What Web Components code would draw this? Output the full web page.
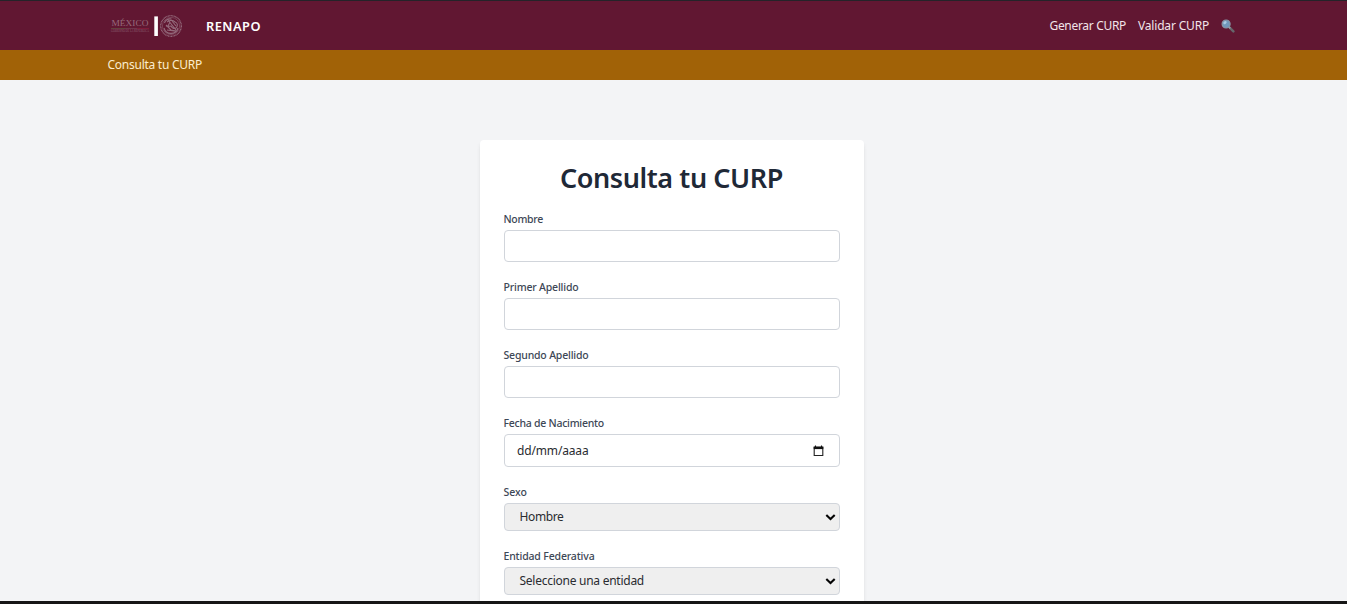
<!DOCTYPE html>
<html lang="es">
<head>
<meta charset="utf-8">
<title>Consulta tu CURP</title>
<style>
html,body{margin:0;height:100%;overflow:hidden}
body{font-family:"Noto Sans","Open Sans",sans-serif;background:#f3f4f6}
</style>
</head>
<body>
<renapo-page></renapo-page>
<script>
const define = (name, html, setup) => {
  const template = document.createElement('template');
  template.innerHTML = html;
  customElements.define(name, class extends HTMLElement {
    connectedCallback() {
      if (this.shadowRoot) return;
      this.attachShadow({mode: 'open'}).append(template.content.cloneNode(true));
      if (setup) setup(this, this.shadowRoot);
    }
  });
};

/* A single line of text whose tracking adapts to the measure it is given. */
define('fit-text', `
<style>:host{display:inline-block;white-space:nowrap}span{display:inline-block}</style>
<span><slot></slot></span>`, (host, root) => {
  const span = root.querySelector('span');
  const target = Number(host.getAttribute('measure'));
  const natural = span.getBoundingClientRect().width;
  if (target && natural) {
    span.style.letterSpacing = (target - natural) / host.textContent.length + 'px';
    host.style.width = target + 'px';
  }
});

define('mexico-logo', `
<style>:host{display:block;width:74px;height:26px}svg{display:block}</style>
<svg width="74" height="26" viewBox="0 0 74 26">
  <text x="1.5" y="13" textLength="37" lengthAdjust="spacingAndGlyphs" font-family="Liberation Serif,serif" font-size="9" fill="#96697b">MÉXICO</text>
  <path d="M1 15.5H16" stroke="#665343" stroke-width=".7"/><path d="M16 15.5H27" stroke="#805467" stroke-width=".5"/><path d="M27 15.5H39" stroke="#8c1d3d" stroke-width=".7"/>
  <text x="1" y="19.4" textLength="38" lengthAdjust="spacingAndGlyphs" font-family="Liberation Serif,serif" font-size="3.2" fill="#8c6072">GOBIERNO DE LA REPÚBLICA</text>
  <rect x="44.3" y="3.4" width="3.6" height="19.6" fill="#fff"/>
  <g fill="none" stroke="#946b7c">
    <circle cx="61" cy="13" r="10.3" stroke-width="1.3" stroke-dasharray="1 .5"/>
    <circle cx="61" cy="13" r="8.6" stroke-width=".5"/>
    <path stroke-width="1.1" d="M54 15c1 4 4 5.4 7 5.4s6-1.4 7-5.4M54.5 10c1-3 4-4.5 7-4M57 9c3-2 6-2 8 0 3 1 3 4 1 6-2 1-4 0-5-2-2 0-3 1-5 0M58 7l4 5 4 5M62 8l4 5M56 12l5 5 5 1M57 17l7 1M60 9l-2 4"/>
  </g>
</svg>`);

define('search-glyph', `
<style>:host{display:block;width:14px;height:14px}svg{display:block}</style>
<svg width="14" height="14" viewBox="0 0 14 14">
  <path d="M8.2 8.2 12.4 12.3" stroke="#66666c" stroke-width="2.5" stroke-linecap="round"/>
  <path d="m7.7 7.8 1.6 1.6" stroke="#99a5ae" stroke-width="1.5"/>
  <circle cx="5.1" cy="5" r="4" fill="#7198bb" stroke="#8995a6" stroke-width="1.2"/>
  <ellipse cx="4" cy="3.6" rx="1.8" ry="1.3" fill="#a9cbe3" transform="rotate(-35 4 3.6)"/>
</svg>`);

define('site-header', `
<style>
:host{display:block;flex:none}
.edge{height:1px;background:#242329}
nav{box-sizing:border-box;height:49px;background:#611732;display:flex;align-items:center;padding:0 112px 0 110px;color:#f2e4e9;font-size:12px;line-height:20px}
mexico-logo{margin:1px 22px 0 0}
.brand{font-weight:600;color:#fff;font-size:12.8px;margin-top:1px}
.links{display:flex;align-items:center;margin-left:auto;gap:12px}
.links fit-text{margin-top:1px}
search-glyph{margin-top:1px}
.sub{box-sizing:border-box;height:30px;background:#a16207;color:#fbedcf;padding:5px 107.5px;font-size:12px;line-height:20px}
</style>
<div class="edge"></div>
<nav><mexico-logo></mexico-logo><fit-text class="brand" measure="55">RENAPO</fit-text>
<div class="links"><fit-text measure="76.5">Generar CURP</fit-text><fit-text measure="71">Validar CURP</fit-text><search-glyph></search-glyph></div></nav>
<div class="sub"><fit-text measure="94.5">Consulta tu CURP</fit-text></div>`);

define('form-field', `
<style>
:host{display:block;margin-bottom:16px}
.label{font-size:10.5px;line-height:18px;height:18px;color:#3d4756;font-weight:500;margin-left:-.5px}
.label fit-text{display:block}
.box{box-sizing:border-box;height:32px;margin-top:2px;border:1px solid #d1d5db;border-radius:4px;background:#fff;display:flex;align-items:center;justify-content:space-between;padding:0 15px 0 12px;font-size:12px;line-height:20px;color:#2a2c30}
:host([kind=date]) .box{height:33px}
:host([kind=date]) ::slotted(fit-text){margin-top:1px}
:host([kind=select]) .box{height:28px;background:#efefef;padding:0 3px 0 14.5px}
svg{display:none;flex:none}
:host([kind=date]) .calendar,:host([kind=select]) .chevron{display:block}
</style>
<div class="label"><fit-text></fit-text></div>
<div class="box"><slot></slot>
<svg class="calendar" width="11" height="12" viewBox="0 0 11 12"><path d="M1.2 2.2h8.6v8.3H1.2z" fill="none" stroke="#222" stroke-width="1.1"/><path d="M.7 1.6h9.6v2.5H.7z" fill="#111"/><path d="M2.5.5v1.5M8.5.5v1.5" stroke="#111" stroke-width="1.1"/></svg>
<svg class="chevron" width="11" height="8" viewBox="0 0 11 8"><path d="m1.3 2 4.2 4 4.2-4" fill="none" stroke="#050505" stroke-width="2.1"/></svg>
</div>`, (host, root) => {
  const old = root.querySelector('fit-text');
  const label = document.createElement('fit-text');
  label.textContent = host.getAttribute('label');
  label.setAttribute('measure', host.getAttribute('measure'));
  old.replaceWith(label);
});

define('form-card', `
<style>
:host{display:block;box-sizing:border-box;width:384px;height:640px;flex:none;background:#fff;border-radius:4px;padding:24px;box-shadow:0 3px 5px -1px #0000001a,0 2px 3px -1px #0000000f}
h1{margin:-3px 0 15.5px -1px;height:33.5px;font-size:27px;line-height:33.5px;font-weight:600;color:#1f2937;display:flex;justify-content:center}
</style>
<h1><fit-text measure="223">Consulta tu CURP</fit-text></h1>
<slot></slot>`);

define('renapo-page', `
<style>
:host{display:flex;flex-direction:column;height:100vh;background:#f3f4f6}
main{flex:1;min-height:0;overflow:hidden;display:flex;justify-content:center;align-items:flex-start;padding:60px 3px 0 0}
footer{height:3px;flex:none;background:#161616}
</style>
<site-header></site-header>
<main><form-card>
<form-field label="Nombre" measure="39.5"></form-field>
<form-field label="Primer Apellido" measure="75"></form-field>
<form-field label="Segundo Apellido" measure="85"></form-field>
<form-field label="Fecha de Nacimiento" measure="100.5" kind="date"><fit-text measure="71.5">dd/mm/aaaa</fit-text></form-field>
<form-field label="Sexo" measure="23.5" kind="select"><fit-text measure="44">Hombre</fit-text></form-field>
<form-field label="Entidad Federativa" measure="91" kind="select"><fit-text measure="124.5">Seleccione una entidad</fit-text></form-field>
</form-card></main>
<footer></footer>`);
</script>
</body>
</html>
